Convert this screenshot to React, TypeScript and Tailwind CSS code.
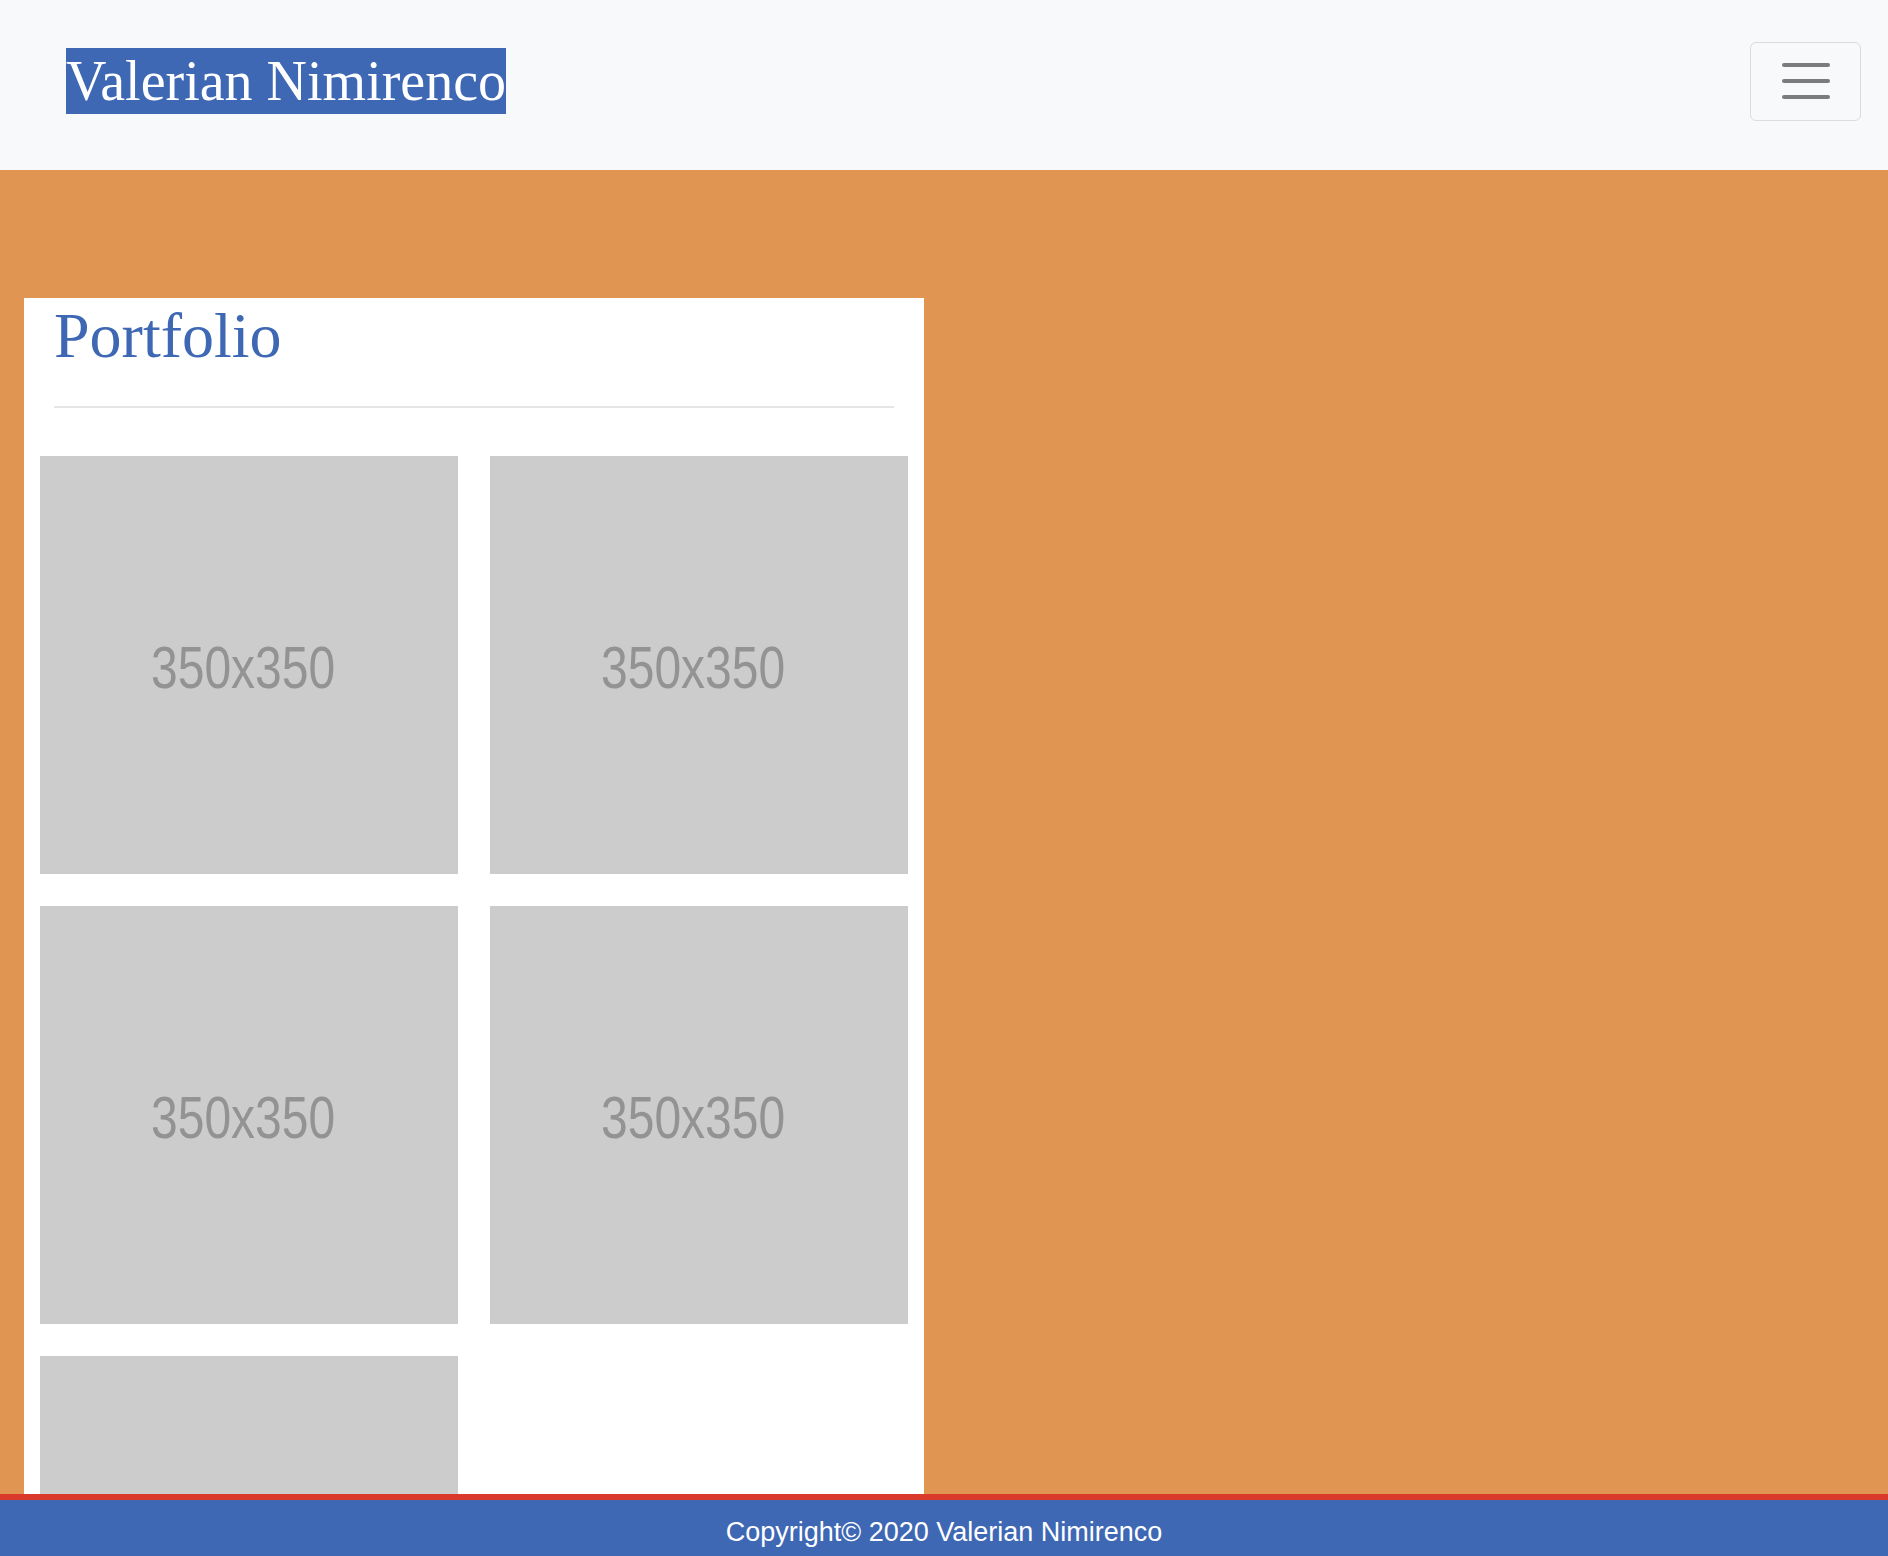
const tiles = [1, 2, 3, 4, 5];

const Placeholder = () => (
  <div className="flex h-[418px] w-[418px] items-center justify-center bg-[#cccccc]">
    <span className="-ml-[12px] mt-[6px] scale-x-[0.8] font-['Liberation_Sans',Arial,sans-serif] text-[60px] leading-none text-[#939393]">
      350x350
    </span>
  </div>
);

const App = () => {
  return (
    <div className="flex h-screen flex-col overflow-hidden bg-[#e09553]">
      {/* Navbar */}
      <nav className="flex h-[170px] shrink-0 items-center justify-between bg-[#f8f9fa] pb-[8px] pl-[66px] pr-[27px]">
        <a
          href="#"
          className="block h-[66px] bg-[#3e67b4] font-['Liberation_Serif','Times_New_Roman',serif] text-[56px] leading-[66px] text-white"
        >
          Valerian Nimirenco
        </a>
        <button className="flex h-[79px] w-[111px] flex-col items-center justify-center gap-[12px] rounded-[6px] border border-[#dcdcdc]">
          <span className="h-[4px] w-[48px] rounded-full bg-[#7b7b7b]" />
          <span className="h-[4px] w-[48px] rounded-full bg-[#7b7b7b]" />
          <span className="h-[4px] w-[48px] rounded-full bg-[#7b7b7b]" />
        </button>
      </nav>

      {/* Main */}
      <main className="min-h-0 flex-1 overflow-hidden pl-[24px] pt-[128px]">
        <section className="w-[900px] bg-white pb-8">
          <div className="px-[30px]">
            <h1 className="font-['Liberation_Serif','Times_New_Roman',serif] text-[64px] leading-[1.2] text-[#3e67b4]">
              Portfolio
            </h1>
            <hr className="mt-[31px] border-t-2 border-[#e6e6e6]" />
          </div>
          <div className="grid grid-cols-2 gap-[32px] px-[16px] pt-[48px]">
            {tiles.map((t) => (
              <Placeholder key={t} />
            ))}
          </div>
        </section>
      </main>

      {/* Footer */}
      <footer className="flex h-[62px] shrink-0 items-center justify-center border-t-[6px] border-[#d93a2b] bg-[#3e67b4] pt-[8px]">
        <p className="font-['Liberation_Sans',Arial,sans-serif] text-[27px] leading-none text-white">
          Copyright© 2020 Valerian Nimirenco
        </p>
      </footer>
    </div>
  );
};

export default App;
